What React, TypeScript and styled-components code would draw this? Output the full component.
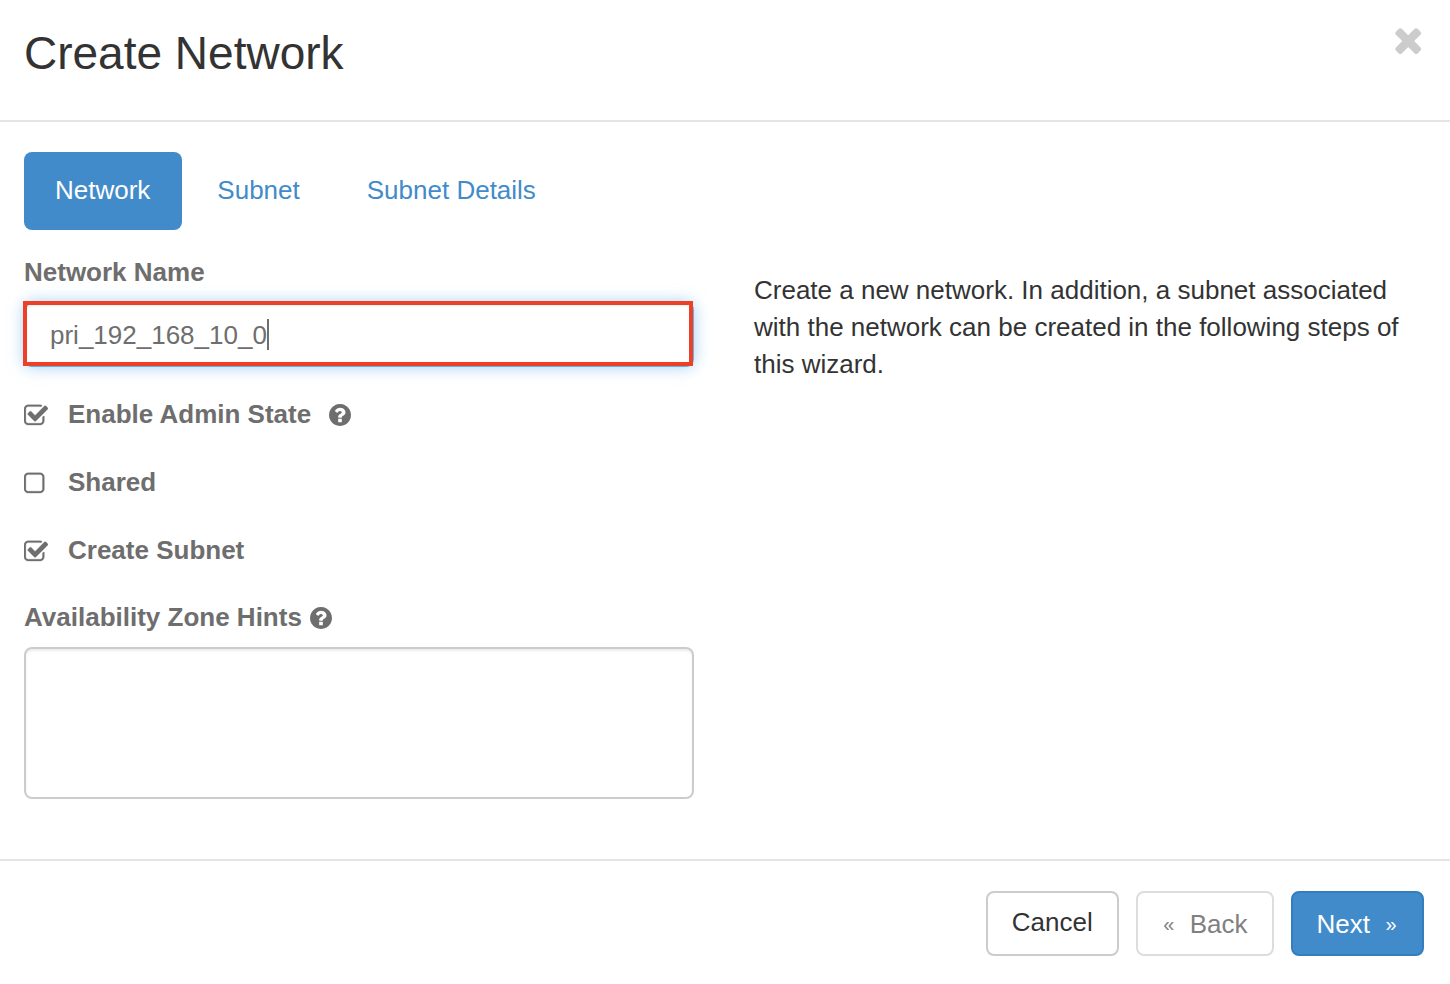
import React, { useState } from "react";
import styled, { createGlobalStyle, css } from "styled-components";

const GlobalStyle = createGlobalStyle`
  *, *::before, *::after { box-sizing: border-box; }
  body {
    margin: 0;
    background: #fff;
    color: #333;
    font-family: "Liberation Sans", Helvetica, Arial, sans-serif;
    font-size: 26px;
    line-height: 37px;
  }
  button, input, select { font: inherit; }
`;

const Header = styled.header`
  display: flex;
  justify-content: space-between;
  align-items: flex-start;
  padding: 20px 26px 34px 24px;
  border-bottom: 2px solid #e5e5e5;
`;

const Title = styled.h1`
  margin: 0;
  font-size: 46px;
  font-weight: 400;
  line-height: 66px;
`;

const CloseButton = styled.button`
  display: flex;
  margin-top: 3px;
  padding: 0;
  border: 0;
  background: none;
  color: #ccc;
  cursor: pointer;
`;

const Body = styled.main`
  padding: 30px 26px 60px 24px;
`;

const Tabs = styled.nav`
  display: flex;
  gap: 4px;
  margin-bottom: 24px;
`;

const Tab = styled.a<{ $active?: boolean }>`
  padding: 20px 32px 21px 31px;
  border-radius: 8px;
  text-decoration: none;
  color: ${(p) => (p.$active ? "#fff" : "#428bca")};
  background: ${(p) => (p.$active ? "#428bca" : "transparent")};
`;

const Columns = styled.div`
  display: grid;
  grid-template-columns: 1fr 1fr;
  column-gap: 60px;
`;

const Form = styled.form`
  display: flex;
  flex-direction: column;
`;

const Field = styled.div`
  display: flex;
  flex-direction: column;
  gap: 11px;
`;

const Label = styled.label`
  color: #6e6e6e;
  font-weight: 700;
`;

const LabelRow = styled.div<{ $gap: number }>`
  display: flex;
  align-items: center;
  gap: ${(p) => p.$gap}px;
`;

const InputFrame = styled.div`
  position: relative;
  display: flex;
  &::after {
    content: "";
    position: absolute;
    inset: -1px 1px 1px -1px;
    border: 4px solid #ee4027;
    pointer-events: none;
  }
`;

const TextInput = styled.input`
  width: 100%;
  height: 65px;
  padding: 2px 24px 0;
  border: 2px solid #66afe9;
  border-radius: 8px;
  outline: 0;
  background: #fff;
  color: #6e6e6e;
  caret-color: transparent;
  box-shadow: inset 0 2px 2px rgba(0, 0, 0, 0.075), 0 0 16px rgba(102, 175, 233, 0.6);
`;

const Caret = styled.span`
  position: absolute;
  top: 17px;
  left: 243px;
  width: 2px;
  height: 31px;
  background: #6e6e6e;
  pointer-events: none;
`;

const CheckList = styled.div`
  display: flex;
  flex-direction: column;
  gap: 31px;
  margin: 29px 0 30px;
`;

const CheckCell = styled.span`
  display: grid;
  width: 24px;
  height: 24px;
  color: #6e6e6e;
  > * { grid-area: 1 / 1; }
  > svg { pointer-events: none; }
`;

const CheckInput = styled.input`
  appearance: none;
  width: 24px;
  height: 24px;
  margin: 0;
  cursor: pointer;
`;

const HelpButton = styled.button`
  display: flex;
  padding: 0;
  border: 0;
  background: none;
  color: #6e6e6e;
`;

const ZoneSelect = styled.select`
  width: 100%;
  height: 152px;
  padding: 12px 24px;
  border: 2px solid #ccc;
  border-radius: 8px;
  background: #fff;
  color: #6e6e6e;
  box-shadow: inset 0 2px 2px rgba(0, 0, 0, 0.075);
`;

const HelpText = styled.p`
  margin: 18px 0 0;
`;

const Footer = styled.footer`
  display: flex;
  justify-content: flex-end;
  gap: 17px;
  padding: 30px 26px 28px;
  border-top: 2px solid #e5e5e5;
`;

const variants = {
  plain: css`
    padding: 0 24px 2px;
    color: #333;
    background: #fff;
    border-color: #ccc;
  `,
  muted: css`
    color: #808080;
    background: #fff;
    border-color: #ddd;
  `,
  primary: css`
    color: #fff;
    background: #428bca;
    border-color: #357ebd;
  `,
};

const Button = styled.button<{ $variant: keyof typeof variants }>`
  display: flex;
  align-items: center;
  gap: 14px;
  height: 65px;
  padding: 2px 24px 0;
  border: 2px solid;
  border-radius: 8px;
  ${(p) => variants[p.$variant]}
`;

const Chevrons = styled.span`
  width: 14px;
  font-size: 20px;
  text-align: center;
`;

const CloseIcon = () => (
  <svg width="39" height="39" viewBox="-170 128 1792 1792" fill="currentColor" aria-hidden="true">
    <path d="M1490 1322q0 40-28 68l-136 136q-28 28-68 28t-68-28l-294-294-294 294q-28 28-68 28t-68-28l-136-136q-28-28-28-68t28-68l294-294-294-294q-28-28-28-68t28-68l136-136q28-28 68-28t68 28l294 294 294-294q28-28 68-28t68 28l136 136q28 28 28 68t-28 68l-294 294 294 294q28 28 28 68z" />
  </svg>
);

const HelpIcon = () => (
  <svg width="22" height="22" viewBox="128 128 1536 1536" fill="currentColor" aria-hidden="true">
    <path d="M1024 1376v-192q0-14-9-23t-23-9h-192q-14 0-23 9t-9 23v192q0 14 9 23t23 9h192q14 0 23-9t9-23zm256-672q0-88-55.5-163t-138.5-116-170-41q-243 0-371 213-15 24 8 42l132 100q7 6 19 6 16 0 25-12 53-68 86-92 34-24 86-24 48 0 85.5 26t37.5 59q0 38-20 61t-68 45q-63 28-115.5 86.5t-52.5 125.5v36q0 14 9 23t23 9h192q14 0 23-9t9-23q0-19 21.5-49.5t54.5-49.5q32-18 49-28.5t46-35 44.5-48 28-60.5 12.5-81zm384 192q0 209-103 385.5t-279.5 279.5-385.5 103-385.5-103-279.5-279.5-103-385.5 103-385.5 279.5-279.5 385.5-103 385.5 103 279.5 279.5 103 385.5z" />
  </svg>
);

const CHECKED_PATH =
  "M1472 930v318q0 119-84.5 203.5t-203.5 84.5h-832q-119 0-203.5-84.5t-84.5-203.5v-832q0-119 84.5-203.5t203.5-84.5h832q63 0 117 25 15 7 18 23 3 17-9 29l-49 49q-10 10-23 10-3 0-9-2-23-6-45-6h-832q-66 0-113 47t-47 113v832q0 66 47 113t113 47h832q66 0 113-47t47-113v-254q0-13 9-22l64-64q10-10 23-10 6 0 12 3 20 8 20 29zm231-489l-814 814q-24 24-57 24t-57-24l-430-430q-24-24-24-57t24-57l110-110q24-24 57-24t57 24l263 263 647-647q24-24 57-24t57 24l110 110q24 24 24 57t-24 57z";
const UNCHECKED_PATH =
  "M1184 256h-832q-66 0-113 47t-47 113v832q0 66 47 113t113 47h832q66 0 113-47t47-113v-832q0-66-47-113t-113-47zm288 160v832q0 119-84.5 203.5t-203.5 84.5h-832q-119 0-203.5-84.5t-84.5-203.5v-832q0-119 84.5-203.5t203.5-84.5h832q119 0 203.5 84.5t84.5 203.5z";

type CheckRowProps = { id: string; label: string; initial?: boolean; help?: string };

function CheckRow({ id, label, initial = false, help }: CheckRowProps) {
  const [checked, setChecked] = useState(initial);
  return (
    <LabelRow $gap={18}>
      <LabelRow $gap={20}>
        <CheckCell>
          <CheckInput id={id} type="checkbox" checked={checked} onChange={() => setChecked(!checked)} />
          <svg
            width="24"
            height="24"
            viewBox="64 5 1664 1664"
            fill="currentColor"
            stroke="currentColor"
            strokeWidth="20"
            aria-hidden="true"
          >
            <path d={checked ? CHECKED_PATH : UNCHECKED_PATH} />
          </svg>
        </CheckCell>
        <Label htmlFor={id}>{label}</Label>
      </LabelRow>
      {help && (
        <HelpButton type="button" aria-label={help}>
          <HelpIcon />
        </HelpButton>
      )}
    </LabelRow>
  );
}

export default function App() {
  const [name, setName] = useState("pri_192_168_10_0");
  return (
    <>
      <GlobalStyle />
      <Header>
        <Title>Create Network</Title>
        <CloseButton type="button" aria-label="Close">
          <CloseIcon />
        </CloseButton>
      </Header>
      <Body>
        <Tabs>
          <Tab href="#network" $active aria-current="step">Network</Tab>
          <Tab href="#subnet">Subnet</Tab>
          <Tab href="#details">Subnet Details</Tab>
        </Tabs>
        <Columns>
          <Form id="network-form">
            <Field>
              <Label htmlFor="name">Network Name</Label>
              <InputFrame>
                <TextInput id="name" type="text" value={name} onChange={(e) => setName(e.target.value)} />
                <Caret />
              </InputFrame>
            </Field>
            <CheckList>
              <CheckRow id="admin" label="Enable Admin State" initial help="About admin state" />
              <CheckRow id="shared" label="Shared" />
              <CheckRow id="create-subnet" label="Create Subnet" initial />
            </CheckList>
            <Field>
              <LabelRow $gap={8}>
                <Label htmlFor="zones">Availability Zone Hints</Label>
                <HelpButton type="button" aria-label="About availability zone hints">
                  <HelpIcon />
                </HelpButton>
              </LabelRow>
              <ZoneSelect id="zones" multiple />
            </Field>
          </Form>
          <HelpText>
            Create a new network. In addition, a subnet associated with the network can be created in the
            following steps of this wizard.
          </HelpText>
        </Columns>
      </Body>
      <Footer>
        <Button type="button" $variant="plain">Cancel</Button>
        <Button type="button" $variant="muted" disabled>
          <Chevrons>«</Chevrons>
          <span>Back</span>
        </Button>
        <Button type="submit" form="network-form" $variant="primary">
          <span>Next</span>
          <Chevrons>»</Chevrons>
        </Button>
      </Footer>
    </>
  );
}
